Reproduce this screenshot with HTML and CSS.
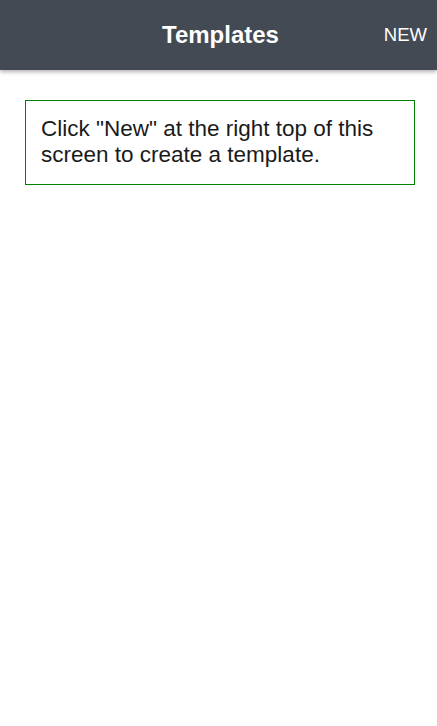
FILE: index.html
```html
<!DOCTYPE html>
<html>
<head>
<meta charset="utf-8">
<link rel="stylesheet" href="styles.css">
</head>
<body>
<header class="bar">
  <div class="bar-side"></div>
  <h1 class="bar-title">Templates</h1>
  <div class="bar-side bar-right"><button class="bar-btn">NEW</button></div>
</header>
<main class="content">
  <div class="notice">Click "New" at the right top of this screen to create a template.</div>
</main>
</body>
</html>
```
FILE: styles.css
```css
html, body {
  margin: 0;
  padding: 0;
  background: #fff;
  font-family: "Liberation Sans", Arial, sans-serif;
}
.bar {
  height: 70px;
  background: #434a54;
  display: grid;
  grid-template-columns: 1fr auto 1fr;
  align-items: center;
  padding: 0 10px 0 14px;
  box-shadow: 0 2px 4px rgba(0,0,0,0.3);
  position: relative;
}
.bar-right {
  display: flex;
  justify-content: flex-end;
}
.bar-title {
  margin: 0;
  color: #fff;
  font-size: 24px;
  font-weight: bold;
}
.bar-btn {
  background: none;
  border: 0;
  color: #fff;
  font-family: inherit;
  font-size: 18.5px;
  padding: 0;
}
.content {
  padding: 30px 22px 0 25px;
}
.notice {
  border: 1px solid #008000;
  padding: 15px 15px 16px 15px;
  font-size: 22.5px;
  line-height: 26px;
  color: #1a1a1a;
}
```
